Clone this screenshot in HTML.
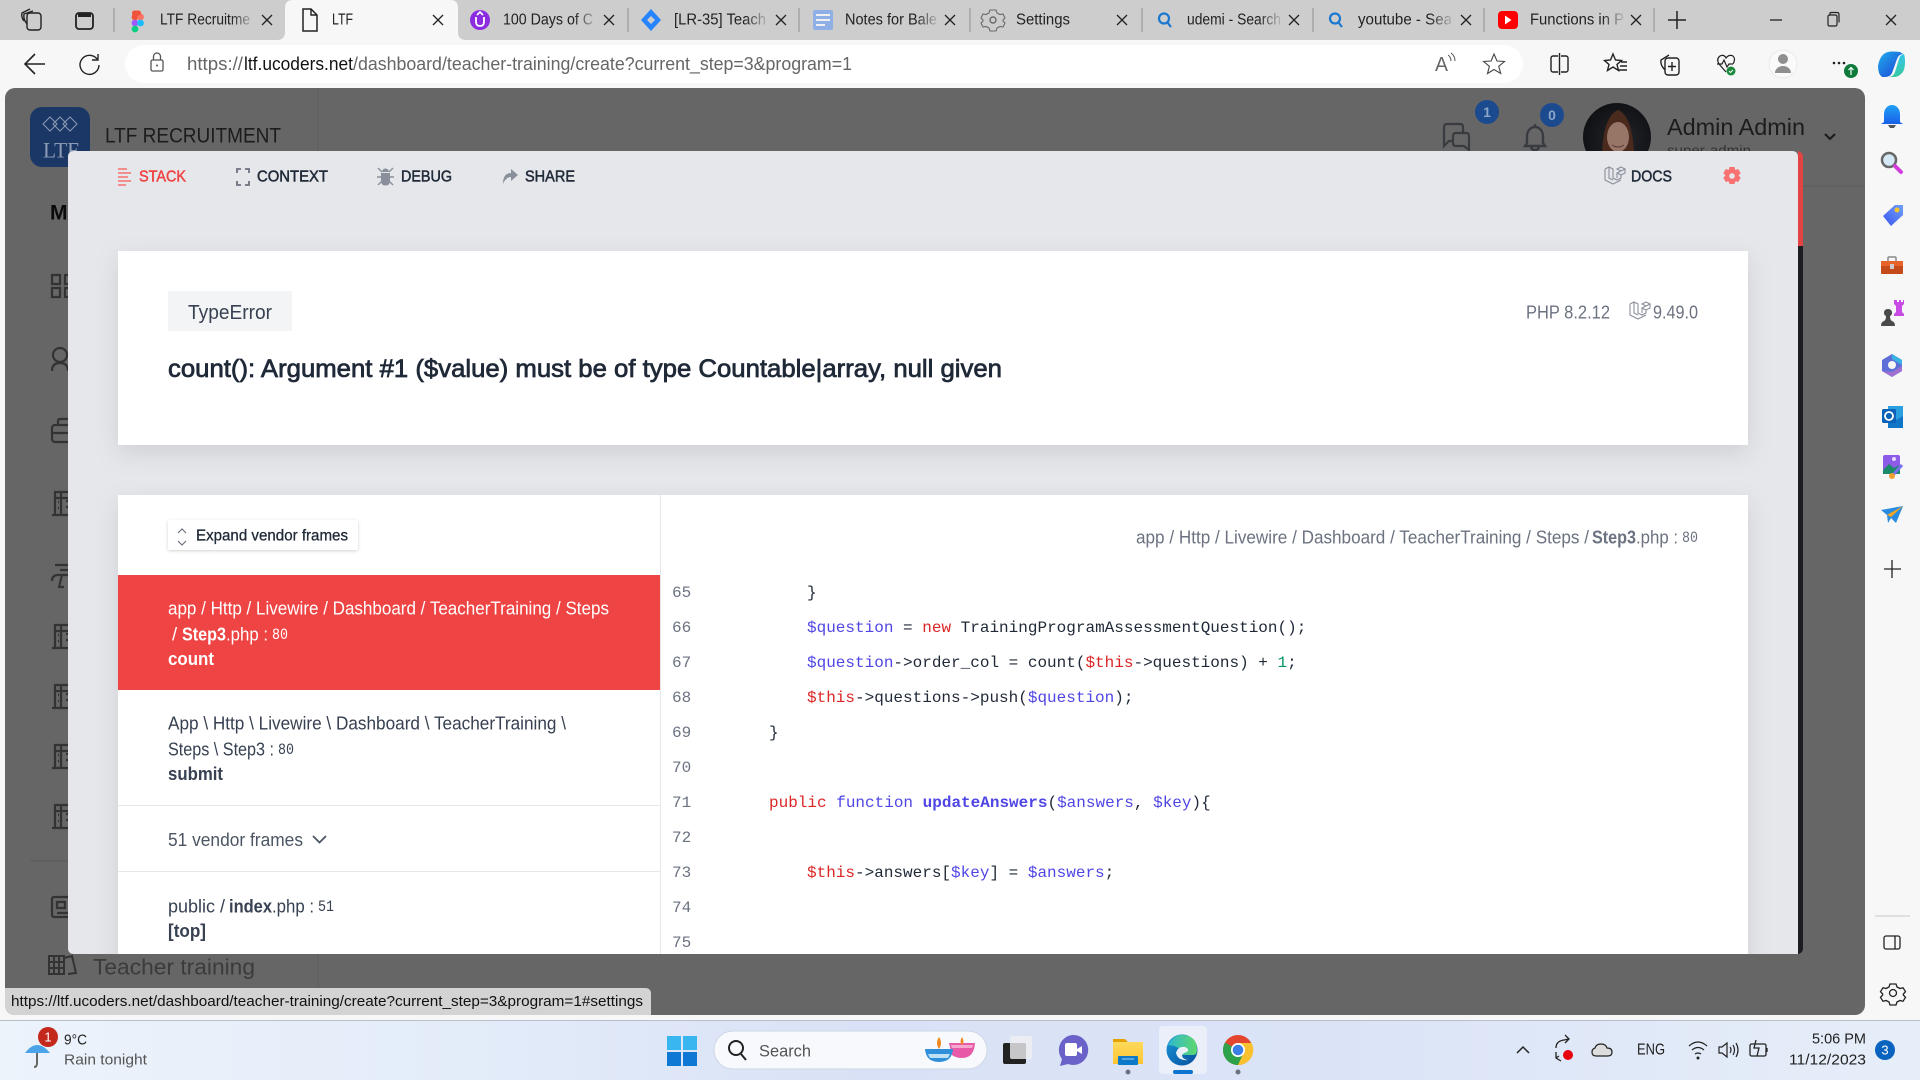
<!DOCTYPE html>
<html><head><meta charset="utf-8"><title>LTF</title>
<style>
html,body{margin:0;padding:0;width:1920px;height:1080px;overflow:hidden;background:#f7f7f7}
svg{display:block}
text{font-family:"Liberation Sans",Arial,sans-serif;dominant-baseline:central}
.m{font-family:"Liberation Mono",monospace;font-size:16px;white-space:pre;dominant-baseline:auto}
.n{fill:#6b7280}.v{fill:#5046e5}.r{fill:#dc2626}.g{fill:#059669}.d{fill:#1f2937}
.tab{font-size:15.500px;fill:#222}
.ic{fill:none;stroke:#333;stroke-width:2.2}
.nv{font-size:15.500px;stroke-width:.5}
</style></head><body>
<svg width="1920" height="1080" viewBox="0 0 1920 1080" xmlns="http://www.w3.org/2000/svg">
<defs>
<linearGradient id="f"><stop offset="0" stop-color="#cdcdcd" stop-opacity="0"/><stop offset="1" stop-color="#cdcdcd"/></linearGradient>
<linearGradient id="tb"><stop offset="0" stop-color="#ecf3fb"/><stop offset=".27" stop-color="#e2ebf9"/><stop offset=".45" stop-color="#d9e1f6"/><stop offset=".7" stop-color="#dbe4f7"/><stop offset="1" stop-color="#e6eef9"/></linearGradient>
<linearGradient id="edge" x1="0" y1="0" x2="1" y2="1"><stop offset="0" stop-color="#1a9ad6"/><stop offset=".6" stop-color="#0d6ab5"/><stop offset="1" stop-color="#0b4f9c"/></linearGradient>
<linearGradient id="edge2" x1="0" y1="0" x2="1" y2="0"><stop offset="0" stop-color="#2fb8d0"/><stop offset="1" stop-color="#5fd86c"/></linearGradient>
<linearGradient id="folder" x1="0" y1="0" x2="0" y2="1"><stop offset="0" stop-color="#ffd95c"/><stop offset="1" stop-color="#fcc530"/></linearGradient>
<linearGradient id="bell" x1="0" y1="0" x2="0" y2="1"><stop offset="0" stop-color="#1fa0f5"/><stop offset="1" stop-color="#1a5fe8"/></linearGradient>
<linearGradient id="tag" x1="0" y1="1" x2="1" y2="0"><stop offset="0" stop-color="#3a55ee"/><stop offset="1" stop-color="#6fa0f8"/></linearGradient>
<linearGradient id="cop" x1="0" y1="0" x2="1" y2="1"><stop offset="0" stop-color="#1fb0e8"/><stop offset=".6" stop-color="#1f6ae0"/><stop offset="1" stop-color="#1a4fc8"/></linearGradient>
<linearGradient id="cop2" x1="0" y1="0" x2="0" y2="1"><stop offset="0" stop-color="#33c6e8"/><stop offset="1" stop-color="#38c8a0"/></linearGradient>
<radialGradient id="av"><stop offset="0" stop-color="#24252a"/><stop offset="1" stop-color="#0f1013"/></radialGradient>
<filter id="sh" x="-5%" y="-15%" width="110%" height="135%"><feDropShadow dx="0" dy="8" stdDeviation="12" flood-color="#000" flood-opacity=".10"/></filter>
<filter id="sh2" x="-10%" y="-30%" width="120%" height="170%"><feDropShadow dx="0" dy="1" stdDeviation="1.500" flood-color="#000" flood-opacity=".18"/></filter>
<g id="lar" fill="none" stroke="#8a8f9a" stroke-width="1.100">
<path d="M1 3l4-2 4 2v9l4 2 4-2V9M1 3v11l8 4 8-4M5 1v11l4 2M9 3v9M17 5l-4 2v5M13 7l4 2M17 5l4-2-4-2-4 2zM21 3v4l-4 2"/>
</g>
<g id="bld" class="ic"><path d="M1 26H22M4 26V3H20M4 9H18M10 3V26M15 12H19M15 18H19M7 13H8M7 19H8"/></g>
<g id="x" fill="none" stroke="#222" stroke-width="1.300"><path d="M-5-5L5 5M5-5L-5 5"/></g>
<g id="q" fill="none" stroke="#1a78d0" stroke-width="2.200"><circle cx="-1" cy="-1.500" r="5"/><path d="M2.500 2.500L6 7"/></g>
</defs>

<!-- Browser chrome -->
<rect width="1920" height="40" fill="#cdcdcd"/>
<rect y="40" width="1920" height="1040" fill="#f7f7f7"/>

<!-- active tab -->
<path d="M277 40q8 0 8-8V8q0-8 8-8H450q8 0 8 8V32q0 8 8 8z" fill="#f7f7f7"/>

<!-- tab strip icons -->
<g fill="none" stroke="#222" stroke-width="1.400">
<rect x="27" y="13" width="14" height="17" rx="3"/><path d="M27 24q-4-5-3-10l9-3M24 21q-3-4-2-8l8-4"/>
<rect x="76" y="13" width="17" height="16" rx="3" stroke-width="1.800"/><rect x="78" y="13" width="13" height="4" fill="#222" stroke="none"/>
<path d="M303 9h8l6 6v16h-14z" stroke-width="1.500"/><path d="M311 9v6h6"/>
<circle cx="993" cy="20" r="3" stroke="#6a6a6a"/><path d="M990 10l6 0 1 3 3 1.500 3-.5 2 4-2 2v1l2 2-2 4-3-.5-3 1.500-1 3h-6l-1-3-3-1.500-3 .5-2-4 2-2v-1l-2-2 2-4 3 .5 3-1.500z" stroke="#6a6a6a" stroke-width="1.100"/>
</g>
<path d="M114 8v24M628 8v24M799 8v24M970 8v24M1142 8v24M1313 8v24M1484 8v24M1654 8v24" stroke="#8f8f8f" stroke-width="1"/>

<!-- figma -->
<g><circle cx="135" cy="17" r="3.400" fill="#f0523a"/><circle cx="140.500" cy="17" r="3.400" fill="#ff7262"/><circle cx="135" cy="23" r="3.400" fill="#a259ff"/><circle cx="140.500" cy="23" r="3.400" fill="#1abcfe"/><circle cx="135" cy="29" r="3.400" fill="#0acf83"/><rect x="132" y="10.500" width="9" height="5" rx="2.500" fill="#f0523a"/></g>
<!-- udemy-like -->
<circle cx="480" cy="20" r="10" fill="#8b2be2"/><path d="M476 17v5q0 4 4 4t4-4v-5M477 15l3-3 3 3" fill="none" stroke="#fff" stroke-width="1.800"/>
<!-- jira -->
<path d="M651 9l10 11-10 11-10-11z" fill="#2684ff"/><path d="M651 16l4 4-4 4-4-4z" fill="#cdcdcd"/>
<!-- notes -->
<rect x="813" y="10" width="20" height="20" rx="2" fill="#8fb0e6"/><path d="M816 15h14M816 20h14M816 25h9" stroke="#f0f0f0" stroke-width="2"/>
<!-- search tabs -->
<use href="#q" x="1165" y="20"/><use href="#q" x="1336" y="20"/>
<!-- yt -->
<rect x="1498" y="11" width="20" height="18" rx="4" fill="#f00"/><path d="M1505 15.500l6.500 4.500-6.500 4.500z" fill="#fff"/>

<g>
<text class="tab" x="160" y="20" textLength="90" lengthAdjust="spacingAndGlyphs">LTF Recruitme</text>
<text class="tab" x="332" y="20" textLength="21" lengthAdjust="spacingAndGlyphs">LTF</text>
<text class="tab" x="503" y="20" textLength="90" lengthAdjust="spacingAndGlyphs">100 Days of C</text>
<text class="tab" x="674" y="20" textLength="92" lengthAdjust="spacingAndGlyphs">[LR-35] Teach</text>
<text class="tab" x="845" y="20" textLength="92" lengthAdjust="spacingAndGlyphs">Notes for Bale</text>
<text class="tab" x="1016" y="20" textLength="54" lengthAdjust="spacingAndGlyphs">Settings</text>
<text class="tab" x="1187" y="20" textLength="94" lengthAdjust="spacingAndGlyphs">udemi - Search</text>
<text class="tab" x="1358" y="20" textLength="94" lengthAdjust="spacingAndGlyphs">youtube - Sea</text>
<text class="tab" x="1530" y="20" textLength="94" lengthAdjust="spacingAndGlyphs">Functions in P</text>
</g>
<rect x="231" y="4" width="25" height="32" fill="url(#f)"/><rect x="574" y="4" width="26" height="32" fill="url(#f)"/>
<rect x="745" y="4" width="25" height="32" fill="url(#f)"/><rect x="916" y="4" width="25" height="32" fill="url(#f)"/>
<rect x="1259" y="4" width="25" height="32" fill="url(#f)"/><rect x="1430" y="4" width="25" height="32" fill="url(#f)"/>
<rect x="1602" y="4" width="25" height="32" fill="url(#f)"/>
<rect x="252" y="4" width="9" height="32" fill="#cdcdcd"/><rect x="596" y="4" width="8" height="32" fill="#cdcdcd"/><rect x="767" y="4" width="8" height="32" fill="#cdcdcd"/><rect x="938" y="4" width="8" height="32" fill="#cdcdcd"/><rect x="1280" y="4" width="8" height="32" fill="#cdcdcd"/><rect x="1451" y="4" width="8" height="32" fill="#cdcdcd"/><rect x="1623" y="4" width="8" height="32" fill="#cdcdcd"/>

<use href="#x" x="267" y="20"/><use href="#x" x="438" y="20"/><use href="#x" x="609" y="20"/><use href="#x" x="781" y="20"/><use href="#x" x="950" y="20"/><use href="#x" x="1122" y="20"/><use href="#x" x="1294" y="20"/><use href="#x" x="1466" y="20"/><use href="#x" x="1636" y="20"/>
<path d="M1677 11v18M1668 20h18" stroke="#222" stroke-width="1.500"/>
<path d="M1770 20h12" stroke="#222" stroke-width="1.300"/>
<g fill="none" stroke="#222" stroke-width="1.200"><rect x="1828" y="15" width="9" height="11" rx="1.500"/><path d="M1830 15v-1.500q0-1 1-1h6q2 0 2 2v8"/></g>
<use href="#x" x="1891" y="20"/>

<!-- toolbar -->
<rect x="125" y="45" width="1398" height="38" rx="19" fill="#fff"/>
<path d="M45 64H26M35 54L25 64l10 10" fill="none" stroke="#222" stroke-width="1.600"/>
<path d="M97 59a9.500 9.500 0 1 0 2 6M98 54v6h-6" fill="none" stroke="#222" stroke-width="1.400"/>
<g fill="none" stroke="#555" stroke-width="1.300"><rect x="151" y="60" width="12" height="11" rx="1.500"/><path d="M153.500 60v-3.500a3.500 3.500 0 0 1 7 0V60"/></g><circle cx="157" cy="65.500" r="1" fill="#555"/>
<text x="187" y="64" font-size="18" fill="#666" textLength="56" lengthAdjust="spacingAndGlyphs">https://</text>
<text x="244" y="64" font-size="18" fill="#111" textLength="109" lengthAdjust="spacingAndGlyphs">ltf.ucoders.net</text>
<text x="353" y="64" font-size="18" fill="#666" textLength="499" lengthAdjust="spacingAndGlyphs">/dashboard/teacher-training/create?current_step=3&amp;program=1</text>
<text x="1435" y="65" font-size="20" fill="#666" textLength="13" lengthAdjust="spacingAndGlyphs">A</text>
<path d="M1448 55q3 2 3 6M1451 53q4 3 4 8" fill="none" stroke="#555" stroke-width="1"/>
<path d="M1494 54l3 7 7.500.500-5.800 4.800 2 7.200-6.700-4-6.500 4 1.900-7.200-5.800-4.800 7.500-.500z" fill="none" stroke="#444" stroke-width="1.100"/>
<g fill="none" stroke="#222" stroke-width="1.400">
<rect x="1551" y="56" width="17" height="16" rx="2"/><path d="M1559.500 52v24" stroke="#f7f7f7" stroke-width="3"/><path d="M1559.500 53v22"/>
<path d="M1613 54l2.500 6 6 .5-4.500 4 1.500 6-5.500-3.500-5.500 3.500 1.500-6-4.500-4 6-.5zM1621 62h6M1620 66h7M1619 70h8"/>
<rect x="1665" y="58" width="14" height="17" rx="3"/><path d="M1672 62v9M1668 66.500h8M1665 70q-5-5-4-10l8-5"/>
<path d="M1726 72l-7-8q-3-5 1-8 4-2 6 2 3-4 7-2 3 3 0 8M1717 64h5l2-4 3 7 2-3h4" stroke-width="1.200"/>
</g>
<circle cx="1731" cy="71" r="4.500" fill="#1a8a3a"/><path d="M1729 71l1.500 1.500 2.500-2.500" stroke="#fff" fill="none"/>
<circle cx="1783" cy="64" r="14" fill="#fafafa" stroke="#eaeaea"/><circle cx="1783" cy="59" r="5" fill="#8f8f8f"/><path d="M1775 73a8 7 0 0 1 16 0z" fill="#8f8f8f"/>
<circle cx="1834" cy="63" r="1.300" fill="#222"/><circle cx="1839" cy="63" r="1.300" fill="#222"/><circle cx="1844" cy="63" r="1.300" fill="#222"/>
<circle cx="1851" cy="71" r="7" fill="#0f7b3a"/><path d="M1851 75v-7M1848.500 70l2.500-2.500 2.500 2.500" stroke="#fff" fill="none" stroke-width="1.200"/>
<path d="M1878 66q2-12 10-14 3-1 12 0l3 2q-4 0-6 5l-5 14q-2 4-7 4h-3q-4-3-4-11z" fill="url(#cop)"/>
<path d="M1905 62q0 9-4 12-3 3-7 3h-5q5-1 6-5l4-13q1-4 5-5 1 3 1 8z" fill="url(#cop2)"/>

<!-- Dimmed app background -->
<rect x="5" y="88" width="1860" height="927" rx="10" fill="#666"/>
<path d="M318 88V1015" stroke="#5f5f5f"/><path d="M318 186H1865" stroke="#5c5c5c" stroke-width="1"/>
<rect x="30" y="107" width="60" height="60" rx="12" fill="#1a3766"/>
<g fill="none" stroke="#8d9bb5" stroke-width="1"><path d="M43 124l7-7 7 7-7 7zM53 124l7-7 7 7-7 7zM63 124l7-7 7 7-7 7z"/></g>
<text x="43" y="150" font-size="22" fill="#8d9bb5" textLength="36" lengthAdjust="spacingAndGlyphs" style="font-family:'Liberation Serif',serif">LTF</text>
<text x="105" y="136" font-size="21" fill="#1c1c1c" textLength="176" lengthAdjust="spacingAndGlyphs">LTF RECRUITMENT</text>
<text x="50" y="213" font-size="21" font-weight="700" fill="#0a0a0a">M</text>
<g class="ic">
<path d="M52 275h8v9h-8zM52 288h8v9h-8zM65 275h8v9h-8zM65 288h8v9h-8z"/>
<circle cx="60" cy="355" r="7"/><path d="M52 371q0-8 8-8t8 8"/>
<rect x="52" y="425" width="24" height="17" rx="3"/><path d="M58 425v-4q0-2 2-2h8q2 0 2 2v4M52 433h24"/>
<path d="M52 581q0-6 6-6h12M60 570h12M55 565h16M62 575l-3 12h5" />
<rect x="52" y="897" width="24" height="20" rx="2"/><path d="M57 902h8v6h-8zM57 913h14"/>
</g>
<use href="#bld" x="51" y="489"/><use href="#bld" x="51" y="622"/><use href="#bld" x="51" y="682"/><use href="#bld" x="51" y="742"/><use href="#bld" x="51" y="802"/>
<path d="M30 861H68" stroke="#5a5a5a"/>

<!-- top bar -->
<g fill="none" stroke="#383b40" stroke-width="2.200"><path d="M1463 132v-5q0-3-3-3h-13q-3 0-3 3v19l5-5h5"/><path d="M1456 133h10q3 0 3 3v14l-5-4h-8q-3 0-3-3v-7q0-3 3-3z"/></g>
<g fill="none" stroke="#383b40" stroke-width="2.400"><path d="M1527 143v-7a8 9 0 0 1 16 0v7l2 3h-20zM1531 146q0 4 4 4t4-4M1535 124v3"/></g>
<circle cx="1487" cy="112" r="12" fill="#1c4a8e"/><text x="1487" y="112" text-anchor="middle" font-size="14" font-weight="700" fill="#8da5c8">1</text>
<circle cx="1552" cy="115" r="12" fill="#1c4a8e"/><text x="1552" y="115" text-anchor="middle" font-size="14" font-weight="700" fill="#8da5c8">0</text>
<clipPath id="ac"><circle cx="1617" cy="137" r="34"/></clipPath>
<g clip-path="url(#ac)"><rect x="1580" y="100" width="80" height="80" fill="url(#av)"/><path d="M1602 175q-2-58 16-65 18 7 16 65z" fill="#4a2a1c"/><ellipse cx="1618" cy="137" rx="11" ry="15" fill="#977668"/><path d="M1612 145q6 4 12 0" stroke="#5c3530" fill="none"/></g>
<text x="1667" y="127" font-size="23" fill="#1c1c1c" textLength="138" lengthAdjust="spacingAndGlyphs">Admin Admin</text>
<text x="1667" y="150" font-size="14" fill="#333" textLength="84" lengthAdjust="spacingAndGlyphs">super-admin</text>
<path d="M1825 134l5 5 5-5" fill="none" stroke="#1a1a1a" stroke-width="2"/>

<!-- Modal -->
<path d="M74 151H1792q6 0 6 6V954H74q-6 0-6-6V157q0-6 6-6z" fill="#e5e7eb"/>
<path d="M1798 151q5 1 5 7V246h-5z" fill="#e24444"/><path d="M1798 246h5V948q0 5-5 6z" fill="#1c1c22"/>

<!-- Nav -->
<path d="M118 170h9M118 174h13M118 178h10M118 182h13M118 186h8" stroke="#f87171" stroke-width="1.600" transform="translate(0,-1)"/>
<text class="nv" x="139" y="177" fill="#ef4444" stroke="#ef4444" textLength="47" lengthAdjust="spacingAndGlyphs">STACK</text>
<path d="M237 173v-4h4M245 169h4v4M249 181v4h-4M241 185h-4v-4" fill="none" stroke="#6b7280" stroke-width="1.800"/>
<text class="nv" x="257" y="177" fill="#1f2937" stroke="#1f2937" textLength="71" lengthAdjust="spacingAndGlyphs">CONTEXT</text>
<path d="M382 172a3.500 3.500 0 0 1 7 0zM381 173h9v8q0 4.500-4.500 4.500T381 181z" fill="#8a909b"/>
<path d="M378 168l4 4M393 168l-4 4M377 177h4M390 177h4M378 185l4-4M393 185l-4-4" fill="none" stroke="#8a909b" stroke-width="1.400"/>
<text class="nv" x="401" y="177" fill="#1f2937" stroke="#1f2937" textLength="51" lengthAdjust="spacingAndGlyphs">DEBUG</text>
<path d="M511 169l7 6-7 6v-4q-5 0-8 7 0-11 8-11z" fill="#8a909b"/>
<text class="nv" x="525" y="177" fill="#1f2937" stroke="#1f2937" textLength="50" lengthAdjust="spacingAndGlyphs">SHARE</text>
<use href="#lar" x="1604" y="166"/>
<text class="nv" x="1631" y="177" fill="#1f2937" stroke="#1f2937" textLength="41" lengthAdjust="spacingAndGlyphs">DOCS</text>
<g fill="#f87171"><circle cx="1732" cy="176" r="6.500"/><path d="M1729.500 167h5l.7 3 3-1 2.500 4.300-2.200 2.200 2.200 2.200-2.500 4.300-3-1-.7 3h-5l-.7-3-3 1-2.500-4.300 2.200-2.200-2.200-2.200 2.500-4.300 3 1z"/></g><circle cx="1732" cy="176" r="2.800" fill="#e5e7eb"/>

<!-- Error card -->
<rect x="118" y="251" width="1630" height="194" fill="#fff" filter="url(#sh)"/>
<rect x="168" y="291" width="124" height="40" rx="2" fill="#f3f4f6"/>
<text x="188" y="313" font-size="20" fill="#374151" textLength="84" lengthAdjust="spacingAndGlyphs">TypeError</text>
<text x="168" y="369" font-size="25" fill="#1f2937" stroke="#1f2937" stroke-width=".75" textLength="834" lengthAdjust="spacingAndGlyphs">count(): Argument #1 ($value) must be of type Countable|array, null given</text>
<text x="1526" y="312" font-size="18.500" fill="#6b7280" textLength="84" lengthAdjust="spacingAndGlyphs">PHP 8.2.12</text>
<use href="#lar" x="1629" y="301"/>
<text x="1653" y="312" font-size="18.500" fill="#6b7280" textLength="45" lengthAdjust="spacingAndGlyphs">9.49.0</text>

<!-- Stack panel -->
<clipPath id="pc"><rect x="60" y="400" width="1738" height="554"/></clipPath>
<g clip-path="url(#pc)">
<rect x="118" y="495" width="1630" height="520" fill="#fff" filter="url(#sh)"/>
</g>
<path d="M660.500 495V954" stroke="#e5e7eb"/>
<rect x="168" y="520" width="190" height="30" rx="2" fill="#fff" filter="url(#sh2)"/>
<path d="M178 533l4-4 4 4M178 541l4 4 4-4" fill="none" stroke="#6b7280" stroke-width="1.200"/>
<text x="196" y="536" font-size="15.500" fill="#1f2937" stroke="#1f2937" stroke-width=".3" textLength="152" lengthAdjust="spacingAndGlyphs">Expand vendor frames</text>

<rect x="118" y="575" width="542" height="115" fill="#ef4444"/>
<text x="168" y="608" font-size="18.500" fill="#fff" textLength="441" lengthAdjust="spacingAndGlyphs">app / Http / Livewire / Dashboard / TeacherTraining / Steps</text>
<text x="172" y="634" font-size="18.500" fill="#fff">/</text>
<text x="182" y="634" font-size="18.500" font-weight="700" fill="#fff" textLength="44" lengthAdjust="spacingAndGlyphs">Step3</text>
<text x="226" y="634" font-size="18.500" fill="#fff" textLength="42" lengthAdjust="spacingAndGlyphs">.php :</text>
<text x="272" y="635" font-size="16" fill="#fff" style="font-family:'Liberation Mono',monospace" textLength="16" lengthAdjust="spacingAndGlyphs">80</text>
<text x="168" y="659" font-size="18" font-weight="700" fill="#fff" textLength="46" lengthAdjust="spacingAndGlyphs">count</text>

<text x="168" y="723" font-size="18.500" fill="#374151" textLength="398" lengthAdjust="spacingAndGlyphs">App \ Http \ Livewire \ Dashboard \ TeacherTraining \</text>
<text x="168" y="749" font-size="18.500" fill="#374151" textLength="106" lengthAdjust="spacingAndGlyphs">Steps \ Step3 :</text>
<text x="278" y="750" font-size="16" fill="#374151" style="font-family:'Liberation Mono',monospace" textLength="16" lengthAdjust="spacingAndGlyphs">80</text>
<text x="168" y="774" font-size="18" font-weight="700" fill="#374151" textLength="55" lengthAdjust="spacingAndGlyphs">submit</text>
<path d="M118 805.500H660M118 871.500H660" stroke="#e5e7eb"/>
<text x="168" y="840" font-size="18" fill="#4b5563" textLength="135" lengthAdjust="spacingAndGlyphs">51 vendor frames</text>
<path d="M313 836l6.500 6.500 6.500-6.500" fill="none" stroke="#4b5563" stroke-width="1.800"/>
<text x="168" y="906" font-size="18.500" fill="#374151" textLength="57" lengthAdjust="spacingAndGlyphs">public /</text>
<text x="229" y="906" font-size="18.500" font-weight="700" fill="#374151" textLength="43" lengthAdjust="spacingAndGlyphs">index</text>
<text x="272" y="906" font-size="18.500" fill="#374151" textLength="42" lengthAdjust="spacingAndGlyphs">.php :</text>
<text x="318" y="907" font-size="16" fill="#374151" style="font-family:'Liberation Mono',monospace" textLength="16" lengthAdjust="spacingAndGlyphs">51</text>
<text x="168" y="931" font-size="18" font-weight="700" fill="#374151" textLength="38" lengthAdjust="spacingAndGlyphs">[top]</text>

<!-- code -->
<text x="1136" y="537" font-size="18.500" fill="#6b7280" textLength="453" lengthAdjust="spacingAndGlyphs">app / Http / Livewire / Dashboard / TeacherTraining / Steps /</text>
<text x="1592" y="537" font-size="18.500" font-weight="700" fill="#6b7280" textLength="44" lengthAdjust="spacingAndGlyphs">Step3</text>
<text x="1636" y="537" font-size="18.500" fill="#6b7280" textLength="42" lengthAdjust="spacingAndGlyphs">.php :</text>
<text x="1682" y="538" font-size="16" fill="#6b7280" style="font-family:'Liberation Mono',monospace" textLength="16" lengthAdjust="spacingAndGlyphs">80</text>

<g>
<text class="m n" x="672" y="597">65</text><text class="m n" x="672" y="632">66</text><text class="m n" x="672" y="667">67</text><text class="m n" x="672" y="702">68</text><text class="m n" x="672" y="737">69</text><text class="m n" x="672" y="772">70</text><text class="m n" x="672" y="807">71</text><text class="m n" x="672" y="842">72</text><text class="m n" x="672" y="877">73</text><text class="m n" x="672" y="912">74</text><text class="m n" x="672" y="947">75</text>
<text class="m d" x="807" y="597">}</text>
<text class="m d" x="807" y="632" xml:space="preserve"><tspan class="v">$question</tspan> = <tspan class="r">new</tspan> TrainingProgramAssessmentQuestion();</text>
<text class="m d" x="807" y="667" xml:space="preserve"><tspan class="v">$question</tspan>-&gt;order_col = count(<tspan class="r">$this</tspan>-&gt;questions) + <tspan class="g">1</tspan>;</text>
<text class="m d" x="807" y="702" xml:space="preserve"><tspan class="r">$this</tspan>-&gt;questions-&gt;push(<tspan class="v">$question</tspan>);</text>
<text class="m d" x="769" y="737">}</text>
<text class="m d" x="769" y="807" xml:space="preserve"><tspan class="r">public</tspan> <tspan class="v">function</tspan> <tspan class="v" font-weight="700">updateAnswers</tspan>(<tspan class="v">$answers</tspan>, <tspan class="v">$key</tspan>){</text>
<text class="m d" x="807" y="877" xml:space="preserve"><tspan class="r">$this</tspan>-&gt;answers[<tspan class="v">$key</tspan>] = <tspan class="v">$answers</tspan>;</text>
</g>

<!-- app bottom strip -->
<rect x="5" y="954" width="1860" height="34" fill="#666"/>
<path d="M318 954V1015" stroke="#5f5f5f"/>
<g fill="none" stroke="#333" stroke-width="2"><path d="M49 956h15v18H49zM49 962h15M49 968h15M54 956v18M59 956v18M64 958l8-2 4 17-8 1"/></g>
<text x="93" y="967" font-size="22" fill="#3b3b3b" textLength="162" lengthAdjust="spacingAndGlyphs">Teacher training</text>

<!-- status bubble -->
<path d="M5 988H645q6 0 6 6v21H15q-10 0-10-10z" fill="#d3d3d3"/>
<text x="11" y="1002" font-size="14.500" fill="#111" textLength="632" lengthAdjust="spacingAndGlyphs">https://ltf.ucoders.net/dashboard/teacher-training/create?current_step=3&amp;program=1#settings</text>

<!-- Right sidebar -->
<path d="M1884 122v-8a8 9 0 0 1 16 0v8l3 2h-22z" fill="url(#bell)"/><path d="M1888 125h8l-2 3h-4z" fill="#555"/>
<circle cx="1889" cy="160" r="7" fill="#d5e8f5" stroke="#666" stroke-width="2.500"/><path d="M1895 166l6 6" stroke="#d23cdc" stroke-width="4" stroke-linecap="round"/>
<path d="M1883 216l12-11h8v10l-12 11z" fill="url(#tag)"/><circle cx="1897" cy="210" r="2.500" fill="#f4c430"/>
<rect x="1881" y="261" width="22" height="13" rx="1" fill="#c44a1a"/><rect x="1881" y="261" width="22" height="5" fill="#e8622a"/><path d="M1888 261v-3q0-1 1-1h6q1 0 1 1v3" fill="none" stroke="#888" stroke-width="1.500"/><rect x="1890" y="264" width="4" height="5" fill="#ccc"/>
<path d="M1881 326q0-4 3-5 2-1 2-5-2-1-2-3 0-4 4-4t4 4q0 2-2 3 0 4 2 5 3 1 3 5z" fill="#4a4a4a"/>
<path d="M1894 304v-4h3v2h2v-2h2v2h2v-2h1v4l-2 2v6l2 2v2h-10v-2l2-2v-6z" fill="#c84be6"/>
<path d="M1892 354l10 6v11l-10 6-10-6v-11z" fill="#5e6fd8"/><path d="M1892 354l10 6v5l-10-6z" fill="#3ab3e0"/><path d="M1882 371l10 6 10-6v-5l-10 6z" fill="#a070d0"/><circle cx="1892" cy="365" r="4" fill="#f7f7f7"/>
<path d="M1888 406h15v20h-15z" fill="#2aa0e0"/><path d="M1888 416l8 4 7-4v12h-15z" fill="#1077c8"/><rect x="1882" y="409" width="14" height="14" rx="1.500" fill="#0a62b8"/><circle cx="1889" cy="416" r="4" fill="none" stroke="#fff" stroke-width="1.800"/>
<rect x="1883" y="455" width="17" height="19" rx="2" fill="#8c5be8"/><path d="M1883 470l6-6 5 4 6-3v9h-17z" fill="#1a8a6a"/><path d="M1893 475l9-10" stroke="#7a70f0" stroke-width="3"/><circle cx="1892" cy="476" r="3" fill="#f0a030"/><circle cx="1894" cy="459" r="2" fill="#e8d8ff"/>
<path d="M1881 510l22-4-7 17-5-5-3 5-1-8z" fill="#2a8ce0"/><path d="M1887 515l16-9-12 11z" fill="#f5a623"/>
<path d="M1892 560v18M1884 569h17" stroke="#222" stroke-width="1.300"/>
<path d="M1875 916h35" stroke="#c8c8c8"/>
<g fill="none" stroke="#222" stroke-width="1.300"><rect x="1884" y="936" width="16" height="13" rx="2"/><path d="M1895 936v13"/></g>
<g fill="none" stroke="#222" stroke-width="1.300"><circle cx="1893" cy="993" r="3.500"/><path d="M1890 984h6l1 3 3 1.500 3-.800 2.500 4-2.200 2.300v1l2.200 2.300-2.500 4-3-.800-3 1.500-1 3h-6l-1-3-3-1.500-3 .800-2.500-4 2.200-2.300v-1l-2.200-2.300 2.500-4 3 .800 3-1.500z"/></g>

<!-- Taskbar -->
<rect y="1020" width="1920" height="60" fill="url(#tb)"/>
<path d="M0 1020.500H1920" stroke="#b9bfca"/>
<path d="M25 1053q12-16 25 0z" fill="#4ca4e8"/><path d="M37 1053v10q0 4-3 4" stroke="#666" fill="none" stroke-width="2"/>
<circle cx="48" cy="1037" r="10" fill="#c4281c"/><text x="48" y="1037" text-anchor="middle" font-size="13" fill="#fff">1</text>
<text x="64" y="1040" font-size="15" fill="#222" textLength="23" lengthAdjust="spacingAndGlyphs">9°C</text>
<text x="64" y="1060" font-size="15" fill="#555" textLength="83" lengthAdjust="spacingAndGlyphs">Rain tonight</text>
<g><rect x="667" y="1036" width="14" height="14" fill="#37b6f0"/><rect x="683" y="1036" width="14" height="14" fill="#37b6f0"/><rect x="667" y="1052" width="14" height="14" fill="#0e78d4"/><rect x="683" y="1052" width="14" height="14" fill="#0e78d4"/></g>
<rect x="714" y="1031" width="273" height="38" rx="19" fill="#f7f9fd" stroke="#ced6e6"/>
<circle cx="736" cy="1048" r="7" fill="none" stroke="#222" stroke-width="2"/><path d="M741 1054l5 6" stroke="#222" stroke-width="2"/>
<text x="759" y="1051" font-size="17" fill="#555" textLength="52" lengthAdjust="spacingAndGlyphs">Search</text>
<path d="M949 1043h26q-1 15-13 15-6 0-10-3z" fill="#e85aa8"/><path d="M951 1045h22l-1 3h-20z" fill="#f5a8d0"/><path d="M962 1037q-3 5 0 8 3-3 0-8z" fill="#f08a20"/>
<path d="M925 1049h28q-1 13-14 13t-14-13z" fill="#2f8fd8"/><path d="M928 1054h22l-2 4h-18z" fill="#bfe0f5"/><path d="M939 1037q-4 6 0 12 4-6 0-12z" fill="#f08a20"/>
<rect x="1003" y="1043" width="23" height="21" rx="2" fill="#222"/><rect x="1010" y="1036" width="22" height="23" rx="2" fill="#f0f0f2" opacity=".8"/>
<path d="M1072 1035a15 15 0 1 1-4 29l-8 2 2-7a15 15 0 0 1 10-24z" fill="#6a62c8"/><rect x="1065" y="1043" width="12" height="13" rx="2" fill="#fff"/><path d="M1077 1049l5-3v8l-5-3z" fill="#fff"/>
<path d="M1113 1039h12l3 3h15v7h-30z" fill="#e6a200"/><rect x="1113" y="1042" width="30" height="22" fill="url(#folder)"/><rect x="1118" y="1056" width="20" height="9" rx="1" fill="#0d7ac9"/><path d="M1122 1059h12" stroke="#9ed0f0"/>
<circle cx="1128" cy="1072" r="2.500" fill="#6b7280"/>
<rect x="1159" y="1026" width="48" height="48" rx="4" fill="#eaeff9"/>
<circle cx="1182" cy="1050" r="15.500" fill="url(#edge)"/><path d="M1168 1045q6-11 15-10 14 1 14 15 0 5-4 5h-11q-4-1-1-5-6-5-13-5z" fill="url(#edge2)"/><path d="M1176 1053q2-7 9-6 5 2 2 5-4 1-5 3 0 4 6 5-10 1-12-7z" fill="#eaeff9"/>
<rect x="1173" y="1070" width="20" height="4" rx="2" fill="#0b74ce"/>
<circle cx="1238" cy="1050" r="15" fill="#e4452f"/><path d="M1238 1050l-13-7.500A15 15 0 0 0 1238 1065l7-13z" fill="#2ea24a"/><path d="M1238 1043h13.500a15 15 0 0 1-13.500 22l6-13z" fill="#fbc02d"/><circle cx="1238" cy="1050" r="7" fill="#fff"/><circle cx="1238" cy="1050" r="5.300" fill="#3b7ee8"/>
<circle cx="1238" cy="1072" r="2.500" fill="#6b7280"/>

<path d="M1517 1053l6-6 6 6" fill="none" stroke="#222" stroke-width="1.500"/>
<path d="M1556 1048q0-7 8-8l5-1M1565 1035l4 4-4 4M1556 1052v6l5 3M1556 1058l3-2" fill="none" stroke="#222" stroke-width="1.300"/><circle cx="1568" cy="1055" r="5" fill="#e8000e"/>
<path d="M1596 1056q-4 0-4-4 0-3 3-4 1-4 6-4 5 0 6 4 5 0 5 4 0 4-4 4z" fill="#ddd" stroke="#222" stroke-width="1.200"/>
<text x="1637" y="1050" font-size="16" fill="#222" textLength="28" lengthAdjust="spacingAndGlyphs">ENG</text>
<path d="M1689 1046q9-8 18 0M1692 1050q6-5 12 0M1695 1054q3-2 6 0" fill="none" stroke="#222" stroke-width="1.300"/><circle cx="1698" cy="1058" r="1.500" fill="#222"/>
<path d="M1719 1047h3l5-4v14l-5-4h-3zM1730 1047q2 3 0 6M1733 1045q3 5 0 10M1736 1043q4 7 0 14" fill="none" stroke="#222" stroke-width="1.200"/>
<g fill="none" stroke="#222" stroke-width="1.300"><rect x="1750" y="1044" width="16" height="12" rx="1.500"/><path d="M1767 1048v4M1756 1040l-2 8h5l-2 8"/></g>
<text x="1812" y="1039" font-size="15" fill="#222" textLength="54" lengthAdjust="spacingAndGlyphs">5:06 PM</text>
<text x="1789" y="1060" font-size="15" fill="#222" textLength="77" lengthAdjust="spacingAndGlyphs">11/12/2023</text>
<circle cx="1885" cy="1050" r="10" fill="#0a63be"/><text x="1885" y="1050" text-anchor="middle" font-size="13" fill="#fff">3</text>
</svg>
</body></html>
